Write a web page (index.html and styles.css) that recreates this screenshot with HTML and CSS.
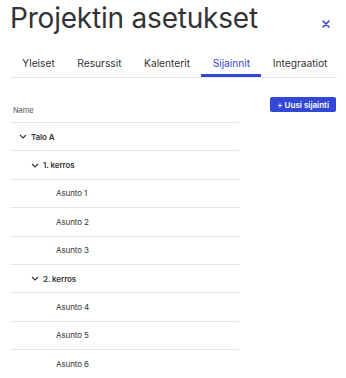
FILE: index.html
```html
<!DOCTYPE html>
<html>
<head>
  <title>Projektin asetukset</title>
  <meta name="viewport" content="width=device-width, initial-scale=1">
  <link rel="stylesheet" href="styles.css">
</head>
<body>
  <div class="header">
    <h1>Projektin asetukset</h1>
    <button class="close" aria-label="Sulje">
      <svg width="8" height="8" viewBox="0 0 8 8"><path d="M1 1L7 7M7 1L1 7" stroke="#3347d6" stroke-width="1.6" stroke-linecap="round"/></svg>
    </button>
  </div>
  <div class="tabs">
    <div class="tab">Yleiset</div>
    <div class="tab">Resurssit</div>
    <div class="tab">Kalenterit</div>
    <div class="tab active">Sijainnit</div>
    <div class="tab">Integraatiot</div>
  </div>
  <div class="content">
    <div class="tree">
      <div class="row head">Name</div>
      <div class="row lvl0 group"><svg class="chev" viewBox="0 0 8 5"><path d="M1 1L4 4L7 1" fill="none" stroke="#333" stroke-width="1.1"/></svg>Talo A</div>
      <div class="row lvl1 group"><svg class="chev" viewBox="0 0 8 5"><path d="M1 1L4 4L7 1" fill="none" stroke="#333" stroke-width="1.1"/></svg>1. kerros</div>
      <div class="row lvl2">Asunto 1</div>
      <div class="row lvl2">Asunto 2</div>
      <div class="row lvl2">Asunto 3</div>
      <div class="row lvl1 group"><svg class="chev" viewBox="0 0 8 5"><path d="M1 1L4 4L7 1" fill="none" stroke="#333" stroke-width="1.1"/></svg>2. kerros</div>
      <div class="row lvl2">Asunto 4</div>
      <div class="row lvl2">Asunto 5</div>
      <div class="row lvl2">Asunto 6</div>
    </div>
    <button class="add">+ Uusi sijainti</button>
  </div>
</body>
</html>
```

FILE: styles.css
```css
body { font-family:Inter,'Noto Sans',sans-serif; margin:0; padding:0 9px 0 10px; background:#fff; color:#333; }
.header { display:flex; justify-content:space-between; align-items:flex-start; height:55px; }
h1 { font-size:28px; font-weight:400; margin:0; padding-top:1px; color:#333; letter-spacing:-0.2px; }
.close { background:none; border:0; padding:0; margin:20px 7px 0 0; cursor:pointer; line-height:0; }
.tabs { display:flex; border-bottom:1px solid #e4e4e4; padding-left:1px; }
.tab { font-size:10.2px; padding:2px 11.3px 5px; border-bottom:3px solid transparent; color:#333; }
.tab.active { color:#3347d6; border-bottom-color:#3347d6; }
.content { display:flex; justify-content:space-between; align-items:flex-start; margin-top:20px; }
.tree { width:229px; }
.row { height:27.4px; border-bottom:1px solid #e6e6e6; display:flex; align-items:center; font-size:8px; letter-spacing:-0.1px; }
.row.head { height:24px; color:#555; padding-left:3px; font-size:7.5px; }
.group { font-weight:600; }
.lvl0 { padding-left:9px; }
.lvl1 { padding-left:21px; }
.lvl2 { padding-left:46px; }
.chev { width:8px; height:5px; margin-right:4px; }
.add { background:#3347d6; color:#fff; border:0; border-radius:2px; font-family:inherit; font-size:8px; font-weight:600;
       height:15px; padding:0 7px; margin-right:1px; margin-top:-1px; }
```
